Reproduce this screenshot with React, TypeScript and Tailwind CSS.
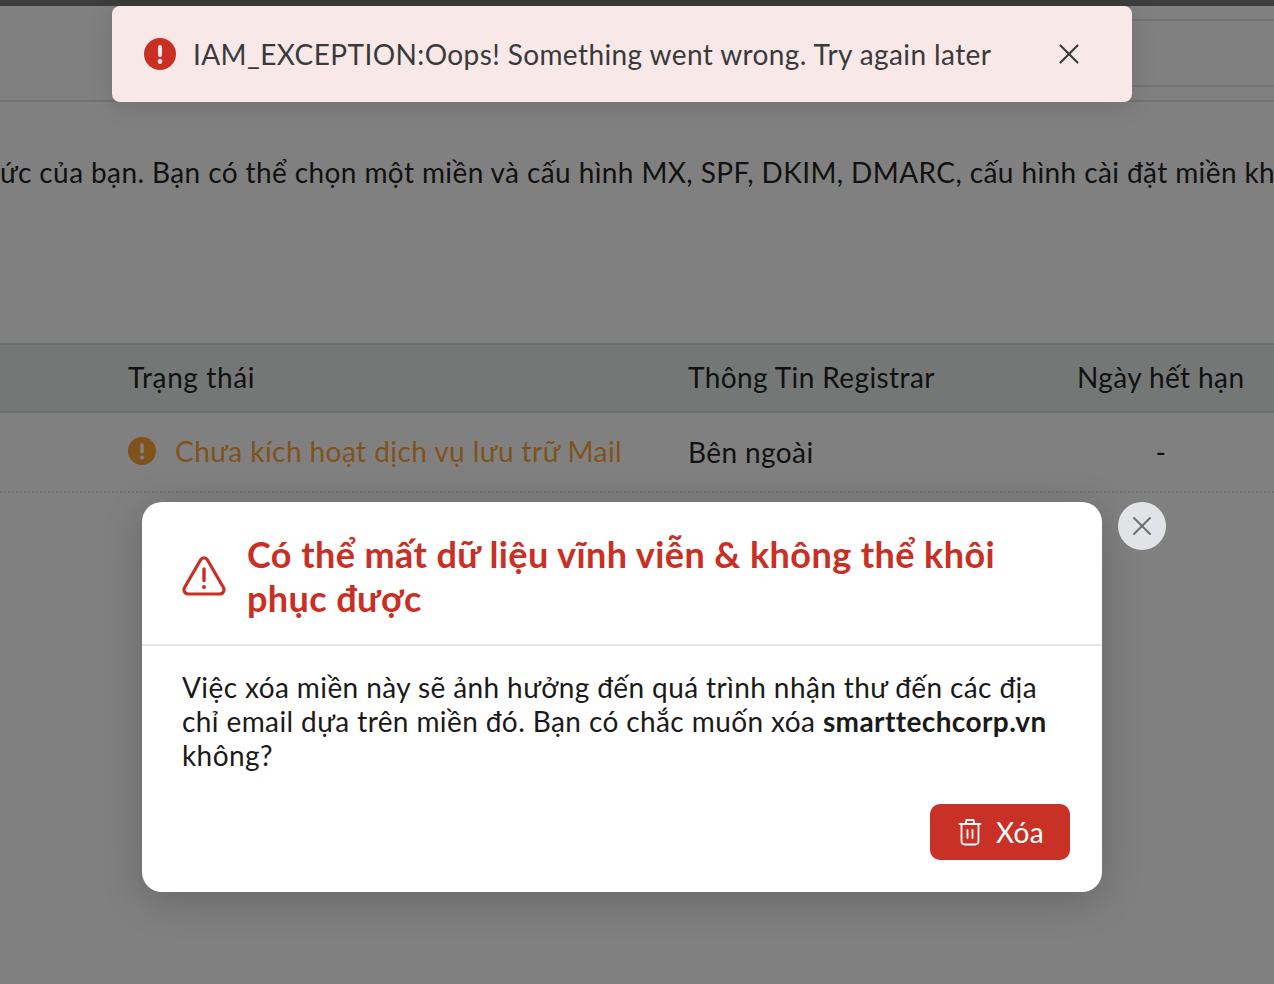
import { X } from "lucide-react";

function ErrorIcon({ className }: { className: string }) {
  return (
    <svg viewBox="0 0 32 32" className={className} fill="currentColor">
      <circle cx="16" cy="16" r="16" />
      <rect x="14" y="7" width="4" height="12" rx="2" fill="var(--mark)" />
      <circle cx="16" cy="23.5" r="2.4" fill="var(--mark)" />
    </svg>
  );
}

function WarningTriangle() {
  return (
    <svg viewBox="0 0 44 40" className="w-[44px] h-[40px] shrink-0 mt-[6px]" fill="none" stroke="#c92f25" strokeWidth="3.2" strokeLinejoin="round" strokeLinecap="round">
      <path d="M18.5 4 L2.6 31.5 C0.9 34.6 3 38 6.5 38 H37.5 C41 38 43.1 34.6 41.4 31.5 L25.5 4 C23.9 1.2 20.1 1.2 18.5 4 Z" />
      <path d="M22 13 V24.5" strokeWidth="3.4" />
      <circle cx="22" cy="31" r="1" strokeWidth="2" fill="#c92f25" />
    </svg>
  );
}

function TrashIcon() {
  return (
    <svg viewBox="0 0 24 28" className="w-[24px] h-[28px]" fill="none" stroke="#fff" strokeWidth="1.8" strokeLinecap="round" strokeLinejoin="round">
      <path d="M1.5 6 H22.5" />
      <path d="M7.5 6 L8.5 2 H15.5 L16.5 6" />
      <path d="M3.5 6 V23 C3.5 25 5 26.5 7 26.5 H17 C19 26.5 20.5 25 20.5 23 V6" />
      <path d="M9.5 12 V20" />
      <path d="M14.5 12 V20" />
    </svg>
  );
}

function App() {
  return (
    <div className="relative w-[1274px] h-[984px] overflow-hidden bg-[#808080] font-['Lato','Noto_Sans',sans-serif] text-[28px] tracking-[0.4px] text-[#111]">
      {/* dimmed page behind the dialog */}
      <div className="h-[6px] bg-[#3d3d3d]" />
      <div className="h-[96px] border-b-2 border-[#727272] flex flex-col pt-[13px]">
        <div className="h-[2px] ml-[600px] bg-[#747474]" />
        <div className="h-[2px] ml-[600px] bg-[#747474] mt-[64px]" />
      </div>
      <div className="mt-[50px] h-[40px] leading-[40px] whitespace-nowrap">
        ức của bạn. Bạn có thể chọn một miền và cấu hình MX, SPF, DKIM, DMARC, cấu hình cài đặt miền kh
      </div>
      <div className="mt-[151px] h-[70px] bg-[#757776] border-y-2 border-[#6d6f6e] flex items-center pl-[128px]">
        <div className="w-[560px] -mt-[2px] tracking-[0.6px]">Trạng thái</div>
        <div className="w-[389px] -mt-[2px]">Thông Tin Registrar</div>
        <div className="whitespace-nowrap -mt-[2px]">Ngày hết hạn</div>
      </div>
      <div className="h-[80px] border-b-2 border-dotted border-[#6f6f6f] flex items-center pl-[128px]">
        <div className="w-[560px] flex items-center gap-[19px] text-[#80521c] [--mark:#808080]">
          <ErrorIcon className="w-[28px] h-[28px] shrink-0 -mt-[3px]" />
          <span className="-mt-[3px] tracking-[0.43px]">Chưa kích hoạt dịch vụ lưu trữ Mail</span>
        </div>
        <div className="w-[390px]">Bên ngoài</div>
        <div className="w-[166px] text-center">-</div>
      </div>

      {/* toast */}
      <div className="absolute left-[112px] top-[6px] w-[1020px] h-[96px] rounded-[8px] bg-[#f8e8e8] shadow-[0_4px_24px_rgba(0,0,0,0.12)] flex items-center pl-[32px] pr-[46px] text-[#3a3a3c]">
        <div className="text-[#c92f25] [--mark:#f8e8e8]">
          <ErrorIcon className="w-[32px] h-[32px] block" />
        </div>
        <span className="ml-[17px] flex-1 whitespace-nowrap">IAM_EXCEPTION:Oops! Something went wrong. Try again later</span>
        <X className="w-[34px] h-[34px]" strokeWidth={1.5} />
      </div>

      {/* dialog */}
      <div className="absolute left-[142px] top-[502px] w-[960px] h-[390px] rounded-[20px] bg-white shadow-[0_8px_40px_rgba(0,0,0,0.2)] flex flex-col">
        <div className="h-[144px] border-b-2 border-[#e5e5e5] flex items-center gap-[21px] pl-[40px] pr-[39px]">
          <WarningTriangle />
          <h2 className="text-[36px] leading-[44px] font-bold tracking-[0.42px] text-[#c92f25] mt-[6px]">
            Có thể mất dữ liệu vĩnh viễn &amp; không thể khôi phục được
          </h2>
        </div>
        <p className="px-[40px] pt-[24px] leading-[34px] text-[#1a1a1a]">
          Việc xóa miền này sẽ ảnh hưởng đến quá trình nhận thư đến các địa chỉ email dựa trên miền đó. Bạn có chắc muốn xóa <b>smarttechcorp.vn</b> không?
        </p>
        <div className="mt-auto pb-[32px] pr-[32px] flex justify-end">
          <button className="w-[140px] h-[56px] pl-[2px] rounded-[10px] bg-[#c93126] text-white flex items-center justify-center gap-[14px]">
            <TrashIcon />
            <span>Xóa</span>
          </button>
        </div>
      </div>
      <button className="absolute left-[1118px] top-[502px] w-[48px] h-[48px] rounded-full bg-[#e2e3e6] text-[#6b6e76] flex items-center justify-center">
        <X className="w-[32px] h-[32px]" strokeWidth={1.5} />
      </button>
    </div>
  );
}

export default App;
